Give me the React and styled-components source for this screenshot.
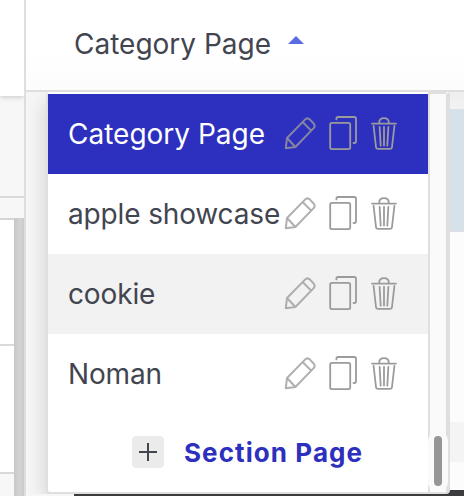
import React from 'react';
import styled, { createGlobalStyle } from 'styled-components';

const pages = [
    { name: 'Category Page', active: true },
    { name: 'apple showcase' },
    { name: 'cookie', hovered: true },
    { name: 'Noman' },
]

const PencilIcon = () => (
    <svg width="32" height="34" viewBox="0 0 32 34" fill="none" stroke="#9b9b9b" strokeOpacity="0.8" strokeWidth="2" strokeLinejoin="round">
        <path d="M1.8 32.2 L3 22 L21 3.6 Q23.4 1.2 26 3.6 L29.4 7.2 Q31.8 10 29.4 12.4 L11.4 31 Z M3 22 L11.4 31 M18.6 6 L27.2 14.6" />
    </svg>
)

const CopyIcon = () => (
    <svg width="28" height="34" viewBox="0 0 28 34" fill="none" stroke="#9b9b9b" strokeWidth="1.8" strokeLinecap="round">
        <rect x="1.2" y="6.9" width="20" height="26.2" rx="1.6" />
        <path d="M7.4 3.4 V2.6 Q7.4 1 9 1 H25.2 Q27 1 27 2.8 V25.2 Q27 27 25.2 27 H24.6" />
    </svg>
)

const TrashIcon = () => (
    <svg width="27" height="34" viewBox="-1 0 27 34" fill="none" stroke="#9b9b9b" strokeWidth="1.8" strokeLinecap="round">
        <path d="M1 7.6 H25 M8.2 6.8 C8.2 3.6 10 2.2 13 2.2 S17.8 3.6 17.8 6.8" />
        <path d="M2.6 10 L5 31 Q5.2 32.8 7 32.8 H19 Q20.8 32.8 21 31 L23.4 10 M8.6 10.8 L9.7 29.6 M13 10.8 V29.6 M17.4 10.8 L16.3 29.6" />
    </svg>
)

class PageItem extends React.Component {
    render () {
        const { page } = this.props
        return (
            <ItemWrapper $active={page.active} $hovered={page.hovered}>
                <ItemName $active={page.active}>{page.name}</ItemName>
                <Actions>
                    <PencilIcon />
                    <CopyIcon />
                    <TrashIcon />
                </Actions>
            </ItemWrapper>
        )
    }
}

function App() {
    return (
        <>
            <GlobalStyle />
            <Layout>
                <Sidebar>
                    <SidebarHeader />
                    <SidebarGap />
                    <SidebarBar />
                    <SidebarBody>
                        <SidebarCells>
                            <Cell $height={126} />
                            <Cell $height={128} />
                            <Cell $height={22} $muted />
                        </SidebarCells>
                        <SidebarScroll />
                    </SidebarBody>
                </Sidebar>
                <Main>
                    <Header>
                        <Selected>Category Page</Selected>
                        <Caret />
                    </Header>
                    <Content>
                        <Gutter />
                        <Preview>
                            <Banner />
                            <Block />
                            <DarkBlock />
                        </Preview>
                    </Content>
                    <Dropdown>
                        <List>
                            {pages.map((page) => (
                                <PageItem key={page.name} page={page} />
                            ))}
                            <AddRow>
                                <AddButton>
                                    <svg width="18" height="18" viewBox="0 0 18 18" stroke="#42474f" strokeWidth="2">
                                        <path d="M9 0 V18 M0 9 H18" />
                                    </svg>
                                </AddButton>
                                <AddLabel>Section Page</AddLabel>
                            </AddRow>
                        </List>
                        <Track>
                            <ThumbHalo>
                                <Thumb />
                            </ThumbHalo>
                        </Track>
                    </Dropdown>
                </Main>
            </Layout>
        </>
    )
}

const GlobalStyle = createGlobalStyle`
    * {
        box-sizing: border-box;
    }
    body {
        margin: 0;
        overflow: hidden;
        font-family: Inter, 'Liberation Sans', sans-serif;
        color: #42454f;
    }
    svg {
        display: block;
        flex-shrink: 0;
    }
`

const Layout = styled.div`
    display: flex;
    width: 464px;
    height: 496px;
    overflow: hidden;
`

const Sidebar = styled.div`
    display: flex;
    flex-direction: column;
    flex-shrink: 0;
    width: 26px;
    border-right: 2px solid #d9dfe3;
    background: #f7f7f7;
    overflow: hidden;
`

const SidebarHeader = styled.div`
    height: 96px;
    background: #fff;
    box-shadow: 0 1px 5px rgba(0, 0, 0, 0.2);
`

const SidebarGap = styled.div`
    height: 102px;
    border-bottom: 2px solid #d9d9d9;
`

const SidebarBar = styled.div`
    height: 22px;
    border-bottom: 2px solid #d5d5d5;
`

const SidebarBody = styled.div`
    display: flex;
    flex: 1;
`

const SidebarCells = styled.div`
    width: 14px;
`

const Cell = styled.div`
    height: ${props => props.$height}px;
    background: ${props => (props.$muted ? '#f7f7f7' : '#fff')};
    border-bottom: ${props => (props.$muted ? 'none' : '2px solid #d9d9d9')};
`

const SidebarScroll = styled.div`
    flex: 1;
    margin-top: -2px;
    background: linear-gradient(to right, #c8c8c8, #d3d3d3 60%, #cacaca);
`

const Main = styled.div`
    position: relative;
    display: flex;
    flex-direction: column;
    flex: 1;
`

const Header = styled.div`
    display: flex;
    align-items: center;
    height: 92px;
    padding: 0 0 3px 48px;
    border-bottom: 2px solid #dedede;
    background: linear-gradient(#fff 60%, #fcfcfc);
`

const Selected = styled.span`
    font-size: 28px;
    line-height: 34px;
    white-space: nowrap;
`

const Caret = styled.span`
    margin: -7px 0 0 17px;
    border: 8px solid transparent;
    border-top: 0;
    border-bottom-color: #5b6be0;
`

const Content = styled.div`
    display: flex;
    flex: 1;
    background: #f6f6f6;
`

const Gutter = styled.div`
    width: 48px;
`

const Preview = styled.div`
    flex: 1;
    padding-top: 17px;
    background: linear-gradient(#eeeeee, #f2f2f2 17px, #fcfcfc 17px);
`

const Banner = styled.div`
    height: 123px;
    border-bottom: 2px solid #dcdfe8;
    background: #d5e2e9;
`

const Block = styled.div`
    height: 40px;
    margin-top: 190px;
    background: #f4f4f4;
`

const DarkBlock = styled.div`
    height: 6px;
    margin-top: 28px;
    background: #3c3c3e;
`

// open menu, hangs over the page preview
const Dropdown = styled.div`
    position: absolute;
    top: 92px;
    left: 20px;
    display: flex;
    width: 404px;
    height: 402px;
    border: 2px solid #dfdfdf;
    border-top-color: #fff;
    border-right-width: 4px;
    border-radius: 4px;
    background: #fff;
    box-shadow: 0 8px 22px rgba(0, 0, 0, 0.16);
    clip-path: inset(0 0 0 -20px);
`

const List = styled.div`
    width: 380px;
`

const ItemWrapper = styled.div`
    display: flex;
    align-items: center;
    height: 80px;
    padding-left: 20px;
    color: ${props => (props.$active ? '#fff' : 'inherit')};
    background: ${props => (props.$active ? '#2d30be' : props.$hovered ? '#f2f2f2' : '#fff')};
`

const ItemName = styled.span`
    width: 216px;
    flex-shrink: 0;
    font-size: 28px;
    line-height: 34px;
    letter-spacing: ${props => (props.$active ? '0' : '-0.14px')};
    white-space: nowrap;
`

const Actions = styled.div`
    display: flex;
    align-self: flex-start;
    gap: 13px;
    margin-top: 22px;
`

const AddRow = styled.div`
    display: flex;
    align-items: center;
    height: 78px;
    padding-left: 84px;
`

const AddButton = styled.div`
    display: flex;
    align-items: center;
    justify-content: center;
    width: 32px;
    height: 32px;
    margin-top: -2px;
    border-radius: 4px;
    background: #ebebeb;
`

const AddLabel = styled.span`
    margin: -2px 0 0 20px;
    font-size: 26px;
    font-weight: 700;
    letter-spacing: 1.08px;
    color: #2d30be;
    white-space: nowrap;
`

const Track = styled.div`
    display: flex;
    align-items: flex-end;
    justify-content: center;
    width: 18px;
    border-left: 2px solid #e0e0e0;
    background: #fafafa;
    box-shadow: 0 -2px 0 #dfdfdf;
`

const ThumbHalo = styled.div`
    flex-shrink: 0;
    width: 20px;
    padding: 5px 6px 6px;
    border-radius: 10px;
    background: #fafafa;
`

const Thumb = styled.div`
    width: 8px;
    height: 50px;
    border-radius: 4px;
    background: #969696;
`

export default App;
